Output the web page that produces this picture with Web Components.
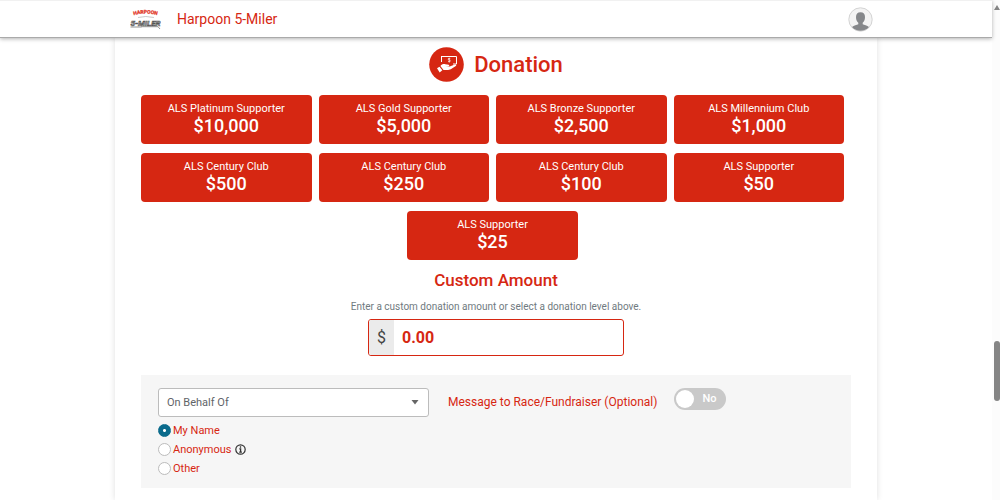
<!DOCTYPE html>
<html lang="en">
<head>
<meta charset="utf-8">
<meta name="viewport" content="width=device-width, initial-scale=1">
<title>Harpoon 5-Miler - Donation</title>
<style>
  html, body { margin: 0; height: 100%; }
  body {
    --brand: #d62712;
    overflow: hidden;
    background: #fff;
    color: var(--brand);
    font-family: Roboto, "Liberation Sans", sans-serif;
    font-size: 11px;
  }
</style>
</head>
<body>
<donation-page></donation-page>

<template id="donation-page">
  <style>
    :host { display: flex; height: 100%; overflow: hidden; }
    .view { flex: 1; min-width: 0; display: flex; flex-direction: column; }
    main {
      flex: 1; box-sizing: border-box; width: 100%; max-width: 762px; min-height: 0;
      margin: 0 auto; padding: 9px 26px 0;
      box-shadow: 0 0 6px rgba(0,0,0,.13);
    }
    .levels {
      display: flex; flex-wrap: wrap; justify-content: center; gap: 9px 7px;
      padding: 13px 7px 0 0;
    }
    donation-level { flex: 0 0 calc((100% - 21px) / 4); }
  </style>
  <div class="view">
    <site-header><span slot="name">Harpoon 5-Miler</span></site-header>
    <main>
      <section-title>Donation</section-title>
      <div class="levels">
        <donation-level amount="$10,000">ALS Platinum Supporter</donation-level>
        <donation-level amount="$5,000">ALS Gold Supporter</donation-level>
        <donation-level amount="$2,500">ALS Bronze Supporter</donation-level>
        <donation-level amount="$1,000">ALS Millennium Club</donation-level>
        <donation-level amount="$500">ALS Century Club</donation-level>
        <donation-level amount="$250">ALS Century Club</donation-level>
        <donation-level amount="$100">ALS Century Club</donation-level>
        <donation-level amount="$50">ALS Supporter</donation-level>
        <donation-level amount="$25">ALS Supporter</donation-level>
      </div>
      <custom-amount></custom-amount>
      <donor-options></donor-options>
    </main>
  </div>
  <page-scrollbar></page-scrollbar>
</template>

<template id="site-header">
  <style>
    :host {
      display: block; position: relative; z-index: 1; background: #fff;
      border-top: 1px solid #f1f1f1; border-bottom: 1px solid #aaa;
      box-shadow: 0 1px 4px rgba(0,0,0,.3);
    }
    .bar {
      display: flex; align-items: center; box-sizing: border-box; height: 36px;
      max-width: 762px; margin: 0 auto; padding: 0 4px 0 15px;
    }
    a { display: flex; align-items: center; gap: 16px; color: var(--brand); text-decoration: none; font-size: 14px; }
    button { margin-left: auto; padding: 0; border: 0; background: none; display: flex; }
    svg { display: block; }
  </style>
  <div class="bar">
    <a href="#">
      <svg width="31" height="22" viewBox="0 0 31 22" role="img" aria-label="Harpoon 5-Miler logo">
        <defs><path id="arch" d="M4.500 7Q15.500 4 26.500 7"/></defs>
        <text font-size="5" font-weight="700" fill="#e2392b" stroke="#e2392b" stroke-width=".3"><textPath href="#arch" startOffset="50%" text-anchor="middle">HARPOON</textPath></text>
        <path d="M8 9.500Q15.500 7.500 24 9.500" fill="none" stroke="#bbb" stroke-width=".8"/>
        <text x="15.500" y="17.500" text-anchor="middle" font-size="8" font-weight="700" font-style="italic" fill="#ccc" stroke="#555" stroke-width=".6">5-MILER</text>
        <path d="M.5 19h11M11 18.700h17l2 2.300" fill="none" stroke="#888" stroke-width=".9"/>
      </svg>
      <slot name="name"></slot>
    </a>
    <button type="button" aria-label="Account">
      <svg width="25" height="25" viewBox="0 0 25 25" aria-hidden="true">
        <circle cx="12.500" cy="12.500" r="11.700" fill="#f3f3f3" stroke="#d3d3d3"/>
        <path d="M12.500 5.200c3 0 4.500 1.800 4.500 4.800 0 2.800-.9 4.700-2.300 5.800v1.500c1.500.9 4.300 1.100 6.300 2.700a11.500 11.500 0 0 1-17 0c2-1.600 4.800-1.800 6.300-2.700v-1.500C8.900 14.700 8 12.800 8 10c0-3 1.500-4.800 4.500-4.800z" fill="#85878a"/>
      </svg>
    </button>
  </div>
</template>

<template id="section-title">
  <style>
    :host { display: flex; justify-content: center; align-items: center; gap: 10px; }
    h1 { margin: 0; font-size: 22px; font-weight: 500; line-height: 26px; }
    svg { display: block; }
  </style>
  <svg width="35" height="35" viewBox="0 0 35 35" aria-hidden="true">
    <circle cx="17.500" cy="17.500" r="17.300" fill="var(--brand)"/>
    <path d="M12.500 9.500h15v7.500H24M12.500 9v6" fill="none" stroke="#fff" stroke-width="1"/>
    <path d="M21.300 11.700c-.5-.5-2.200-.6-2.200.4 0 1.100 2.300.6 2.300 1.800 0 1-1.800 1-2.400.3M20.200 10.800v4.700" fill="none" stroke="#fff" stroke-width=".7"/>
    <path d="M8 21.300l2.500-1.500 2.800 3.400-2.600 2.200z" fill="#fff"/>
    <path d="M11.400 19c1.600-2 3.300-2.300 5-1.700l3.300.4c1 .4.700 1.500-.3 1.500l-3 .2 4.300.1 5.200-1.900c1.400-.3 1.800.8.900 1.500l-5 3.200c-1.700 1-4 .6-7.300.7z" fill="#fff"/>
  </svg>
  <h1><slot></slot></h1>
</template>

<template id="donation-level">
  <style>
    :host { display: block; }
    button {
      display: block; width: 100%; padding: 7px 4px 8px; border: 0; border-radius: 4px;
      background: var(--brand); color: #fff; font-family: inherit; text-align: center; cursor: pointer;
    }
    span, strong { display: block; }
    span { font-size: 11px; line-height: 14px; }
    strong { font-size: 18px; line-height: 20px; font-weight: 500; }
  </style>
  <button type="button"><span><slot></slot></span><strong></strong></button>
</template>

<template id="custom-amount">
  <style>
    :host { display: block; text-align: center; }
    h2 { margin: 0; padding-top: 10px; font-size: 17px; line-height: 20px; font-weight: 500; }
    label { display: block; padding-top: 9px; font-size: 10px; line-height: 16px; color: #707a80; }
    .field {
      display: flex; box-sizing: border-box; width: 256px; height: 37px; margin: 4px auto 0; overflow: hidden;
      border: 1px solid var(--brand); border-radius: 3px; background: #fff;
    }
    .unit { display: grid; place-items: center; width: 25px; background: #ebebeb; color: #444; font-size: 16px; }
    input {
      flex: 1; min-width: 0; padding: 0 8px; border: 0; outline: 0; background: none;
      color: var(--brand); font: 700 16px Roboto, "Liberation Sans", sans-serif;
    }
  </style>
  <h2>Custom Amount</h2>
  <label for="amount">Enter a custom donation amount or select a donation level above.</label>
  <div class="field"><span class="unit">$</span><input id="amount" type="text" inputmode="decimal" value="0.00"></div>
</template>

<template id="donor-options">
  <style>
    :host {
      display: grid; grid-template-columns: 271px 1fr; column-gap: 19px;
      box-sizing: border-box; margin-top: 19px; padding: 13px 17px 12px; background: #f6f6f6;
    }
    .select { position: relative; }
    select {
      appearance: none; display: block; box-sizing: border-box; width: 100%; height: 29px; padding: 0 8px;
      border: 1px solid #bcbcbc; border-radius: 3px; background: #fff; color: #5f6468;
      font: 11px Roboto, "Liberation Sans", sans-serif;
    }
    .arrow { position: absolute; right: 10px; top: 12px; pointer-events: none; }
    .choices { display: grid; row-gap: 3px; padding-top: 5px; }
    .choice { display: flex; align-items: center; height: 16px; gap: 2px; }
    .info { padding: 0; border: 0; margin-left: 2px; background: none; display: flex; }
    input[type=radio] {
      appearance: none; box-sizing: border-box; width: 13px; height: 13px; margin: 0;
      border: 1px solid #bcbcbc; border-radius: 50%; background: #fff;
    }
    input[type=radio]:checked {
      border-color: #0b6b8c; background: radial-gradient(circle, #fff 1px, #0b6b8c 2px);
    }
    .message { display: flex; align-items: start; gap: 17px; font-size: 12px; }
    .message label { line-height: 28px; }
    .toggle { display: flex; position: relative; }
    .toggle input {
      appearance: none; width: 52px; height: 22px; margin: 0; border-radius: 11px; background: #c9c9c9;
    }
    .toggle::before {
      content: ""; position: absolute; left: 2px; top: 2px; width: 18px; height: 18px; border-radius: 50%;
      background: #fff; pointer-events: none;
    }
    .toggle span {
      position: absolute; right: 10px; top: 0; line-height: 22px; font-size: 11px; font-weight: 500;
      color: #fff; pointer-events: none;
    }
  </style>
  <div>
    <div class="select">
      <select aria-label="On Behalf Of"><option>On Behalf Of</option></select>
      <svg class="arrow" width="8" height="5" viewBox="0 0 8 5" aria-hidden="true"><path d="M.5 0h7L4 4.500z" fill="#666"/></svg>
    </div>
    <div class="choices">
      <div class="choice"><input type="radio" name="donor" id="mine" checked><label for="mine">My Name</label></div>
      <div class="choice"><input type="radio" name="donor" id="anon"><label for="anon">Anonymous</label>
        <button class="info" type="button" aria-label="About anonymous donations">
          <svg width="11" height="11" viewBox="0 0 11 11" aria-hidden="true"><circle cx="5.500" cy="5.500" r="4.700" fill="none" stroke="#333" stroke-width="1.200"/><path d="M5.500 2.200v1.500M4.300 4.900h1.300V8M4.200 8.200h2.700" fill="none" stroke="#333" stroke-width="1.300"/></svg>
        </button></div>
      <div class="choice"><input type="radio" name="donor" id="other"><label for="other">Other</label></div>
    </div>
  </div>
  <div class="message">
    <label for="message">Message to Race/Fundraiser (Optional)</label>
    <div class="toggle"><input type="checkbox" role="switch" id="message"><span>No</span></div>
  </div>
</template>

<template id="page-scrollbar">
  <style>
    :host { display: block; position: relative; width: 8px; background: #fcfcfc; overflow: hidden; }
    .up { position: absolute; left: 2px; top: 5px; }
    .thumb { position: absolute; left: 2px; top: 68.2%; width: 6px; height: 12%; border-radius: 3px; background: #858585; }
  </style>
  <svg class="up" width="6" height="5" viewBox="0 0 6 5" aria-hidden="true"><path d="M0 5l3-5 3 5z" fill="#858585"/></svg>
  <div class="thumb"></div>
</template>

<script>
  class TemplateElement extends HTMLElement {
    constructor() {
      super();
      const template = document.getElementById(this.localName);
      this.attachShadow({ mode: "open" }).append(template.content.cloneNode(true));
    }
  }

  class DonationLevel extends TemplateElement {
    connectedCallback() {
      this.shadowRoot.querySelector("strong").textContent = this.getAttribute("amount");
    }
  }

  class DonorOptions extends TemplateElement {
    connectedCallback() {
      const input = this.shadowRoot.getElementById("message");
      const state = this.shadowRoot.querySelector(".toggle span");
      input.addEventListener("change", () => { state.textContent = input.checked ? "Yes" : "No"; });
    }
  }

  customElements.define("site-header", class extends TemplateElement {});
  customElements.define("section-title", class extends TemplateElement {});
  customElements.define("donation-level", DonationLevel);
  customElements.define("custom-amount", class extends TemplateElement {});
  customElements.define("donor-options", DonorOptions);
  customElements.define("page-scrollbar", class extends TemplateElement {});
  customElements.define("donation-page", class extends TemplateElement {});
</script>
</body>
</html>
